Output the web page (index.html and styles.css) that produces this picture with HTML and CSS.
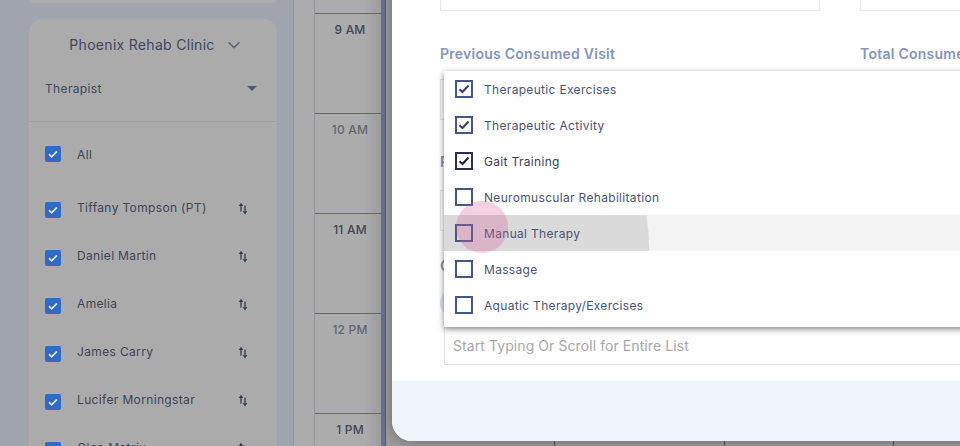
FILE: index.html
```html
<!DOCTYPE html>
<html lang="en">
<head>
    <meta charset="UTF-8">
    <meta name="viewport" content="width=device-width, initial-scale=1.0">
    <title>Schedule</title>
    <link rel="stylesheet" href="styles.css">
</head>
<body>
    <div class="page">
        <aside class="side">
            <div class="card-top"></div>
            <div class="card">
                <div class="clinic">
                    <span>Phoenix Rehab Clinic</span>
                    <svg class="chev" width="14" height="8" viewBox="0 0 14 8"><path d="M1.500 1.200 7 6.600l5.500-5.400" fill="none" stroke="#5c6479" stroke-width="1.500"/></svg>
                </div>
                <div class="picker">
                    <span>Therapist</span>
                    <i class="caret"></i>
                </div>
                <ul class="staff">
                    <li class="staff-all">
                        <svg class="tick" width="16" height="16" viewBox="0 0 16 16"><rect width="16" height="16" rx="2" fill="#3269c6"/><path d="M4 8.200l2.700 2.600L12 5.400" fill="none" stroke="#dfe3ea" stroke-width="1.800"/></svg>
                        <span>All</span>
                    </li>
                    <li>
                        <svg class="tick" width="16" height="16" viewBox="0 0 16 16"><rect width="16" height="16" rx="2" fill="#3269c6"/><path d="M4 8.200l2.700 2.600L12 5.400" fill="none" stroke="#dfe3ea" stroke-width="1.800"/></svg>
                        <span>Tiffany Tompson (PT)</span>
                        <svg class="sort" width="10" height="13" viewBox="0 0 10 13"><path d="M3 9.500V2M7 3.500V11" fill="none" stroke="#333b50" stroke-width="1.300"/><path d="M.8 4 3 .8 5.200 4zM4.800 9.200h4.400L7 12.400z" fill="#333b50"/></svg>
                    </li>
                    <li>
                        <svg class="tick" width="16" height="16" viewBox="0 0 16 16"><rect width="16" height="16" rx="2" fill="#3269c6"/><path d="M4 8.200l2.700 2.600L12 5.400" fill="none" stroke="#dfe3ea" stroke-width="1.800"/></svg>
                        <span>Daniel Martin</span>
                        <svg class="sort" width="10" height="13" viewBox="0 0 10 13"><path d="M3 9.500V2M7 3.500V11" fill="none" stroke="#333b50" stroke-width="1.300"/><path d="M.8 4 3 .8 5.200 4zM4.800 9.200h4.400L7 12.400z" fill="#333b50"/></svg>
                    </li>
                    <li>
                        <svg class="tick" width="16" height="16" viewBox="0 0 16 16"><rect width="16" height="16" rx="2" fill="#3269c6"/><path d="M4 8.200l2.700 2.600L12 5.400" fill="none" stroke="#dfe3ea" stroke-width="1.800"/></svg>
                        <span>Amelia</span>
                        <svg class="sort" width="10" height="13" viewBox="0 0 10 13"><path d="M3 9.500V2M7 3.500V11" fill="none" stroke="#333b50" stroke-width="1.300"/><path d="M.8 4 3 .8 5.200 4zM4.800 9.200h4.400L7 12.400z" fill="#333b50"/></svg>
                    </li>
                    <li>
                        <svg class="tick" width="16" height="16" viewBox="0 0 16 16"><rect width="16" height="16" rx="2" fill="#3269c6"/><path d="M4 8.200l2.700 2.600L12 5.400" fill="none" stroke="#dfe3ea" stroke-width="1.800"/></svg>
                        <span>James Carry</span>
                        <svg class="sort" width="10" height="13" viewBox="0 0 10 13"><path d="M3 9.500V2M7 3.500V11" fill="none" stroke="#333b50" stroke-width="1.300"/><path d="M.8 4 3 .8 5.200 4zM4.800 9.200h4.400L7 12.400z" fill="#333b50"/></svg>
                    </li>
                    <li>
                        <svg class="tick" width="16" height="16" viewBox="0 0 16 16"><rect width="16" height="16" rx="2" fill="#3269c6"/><path d="M4 8.200l2.700 2.600L12 5.400" fill="none" stroke="#dfe3ea" stroke-width="1.800"/></svg>
                        <span>Lucifer Morningstar</span>
                        <svg class="sort" width="10" height="13" viewBox="0 0 10 13"><path d="M3 9.500V2M7 3.500V11" fill="none" stroke="#333b50" stroke-width="1.300"/><path d="M.8 4 3 .8 5.200 4zM4.800 9.200h4.400L7 12.400z" fill="#333b50"/></svg>
                    </li>
                    <li>
                        <svg class="tick" width="16" height="16" viewBox="0 0 16 16"><rect width="16" height="16" rx="2" fill="#3269c6"/><path d="M4 8.200l2.700 2.600L12 5.400" fill="none" stroke="#dfe3ea" stroke-width="1.800"/></svg>
                        <span>Olga Matrix</span>
                        <svg class="sort" width="10" height="13" viewBox="0 0 10 13"><path d="M3 9.500V2M7 3.500V11" fill="none" stroke="#333b50" stroke-width="1.300"/><path d="M.8 4 3 .8 5.200 4zM4.800 9.200h4.400L7 12.400z" fill="#333b50"/></svg>
                    </li>
                </ul>
            </div>
        </aside>
        <div class="gutter"></div>
        <div class="times">
            <div class="hour">9 AM</div>
            <div class="hour hour-dim">10 AM</div>
            <div class="hour">11 AM</div>
            <div class="hour hour-dim">12 PM</div>
            <div class="hour">1 PM</div>
        </div>
        <div class="grid-edge"></div>
        <div class="grid">
            <div class="grid-col grid-first"></div>
            <div class="grid-col"></div>
            <div class="grid-col"></div>
            <div class="grid-col"></div>
        </div>
    </div>

    <div class="modal">
        <div class="modal-body">
            <div class="form-row form-row-top">
                <div class="input-box input-a"></div>
                <div class="input-box input-b"></div>
            </div>
            <div class="form-row labels">
                <div class="label label-a">Previous Consumed Visit</div>
                <div class="label">Total Consumed Visit</div>
            </div>
            <div class="input-box input-mid input-first"></div>
            <div class="label label-mid">Plan</div>
            <div class="input-box input-mid input-second"></div>
            <div class="label label-mid label-code">CPT</div>
            <i class="chip"></i>
            <div class="search-box">Start Typing Or Scroll for Entire List</div>
        </div>
        <div class="modal-foot"></div>

        <ul class="menu">
            <li>
                <svg class="box" width="18" height="18" viewBox="0 0 18 18"><rect x="1" y="1" width="16" height="16" fill="none" stroke="#46558f" stroke-width="2"/><path d="M4.500 9.200l3 2.800 6-6.500" fill="none" stroke="#39436a" stroke-width="2"/></svg>
                <span>Therapeutic Exercises</span>
            </li>
            <li>
                <svg class="box" width="18" height="18" viewBox="0 0 18 18"><rect x="1" y="1" width="16" height="16" fill="none" stroke="#46558f" stroke-width="2"/><path d="M4.500 9.200l3 2.800 6-6.500" fill="none" stroke="#39436a" stroke-width="2"/></svg>
                <span>Therapeutic Activity</span>
            </li>
            <li>
                <svg class="box" width="18" height="18" viewBox="0 0 18 18"><rect x="1" y="1" width="16" height="16" fill="none" stroke="#2c2f4a" stroke-width="2"/><path d="M4.500 9.200l3 2.800 6-6.500" fill="none" stroke="#1f2238" stroke-width="2"/></svg>
                <span class="menu-dark">Gait Training</span>
            </li>
            <li>
                <svg class="box" width="18" height="18" viewBox="0 0 18 18"><rect x="1" y="1" width="16" height="16" fill="none" stroke="#46558f" stroke-width="2"/></svg>
                <span>Neuromuscular Rehabilitation</span>
            </li>
            <li class="menu-hover">
                <div class="wave-clip"><i class="wave"></i></div>
                <svg class="box" width="18" height="18" viewBox="0 0 18 18"><rect x="1" y="1" width="16" height="16" fill="none" stroke="#46558f" stroke-width="2"/></svg>
                <span>Manual Therapy</span>
                <i class="ripple"></i>
            </li>
            <li>
                <svg class="box" width="18" height="18" viewBox="0 0 18 18"><rect x="1" y="1" width="16" height="16" fill="none" stroke="#46558f" stroke-width="2"/></svg>
                <span>Massage</span>
            </li>
            <li>
                <svg class="box" width="18" height="18" viewBox="0 0 18 18"><rect x="1" y="1" width="16" height="16" fill="none" stroke="#46558f" stroke-width="2"/></svg>
                <span>Aquatic Therapy/Exercises</span>
            </li>
        </ul>
    </div>
</body>
</html>
```

FILE: styles.css
```css
html, body {
    margin: 0;
    height: 100%;
    overflow: hidden;
}
body {
    font-family: Inter, "Noto Sans", sans-serif;
    background-color: #777;
}
ul {
    list-style: none;
    margin: 0;
    padding: 0;
}

/* page behind the dialog */
.page {
    display: flex;
    height: 446px;
    background-color: #9a9a9a;
}
.side {
    width: 294px;
    box-sizing: border-box;
    padding-left: 29px;
    padding-right: 16px;
    background-color: #9fa4ae;
    border-right: 1px solid #8f939d;
    flex-shrink: 0;
}
.card-top {
    height: 3px;
    margin-bottom: 16px;
    background-color: #ababab;
    border-radius: 0 0 14px 14px;
}
.card {
    background-color: #ababab;
    border-radius: 14px 14px 0 0;
    height: 427px;
    overflow: hidden;
}
.clinic {
    display: flex;
    justify-content: center;
    align-items: center;
    gap: 12px;
    height: 50px;
    padding-left: 4px;
    font-size: 14px;
    letter-spacing: 0.3px;
    color: #40485e;
}
.chev {
    margin-top: 1px;
}
.picker {
    display: flex;
    justify-content: space-between;
    align-items: center;
    height: 38px;
    padding: 0 20px 14px 16px;
    font-size: 12px;
    letter-spacing: 0.35px;
    color: #40485e;
    border-bottom: 1px solid #a0a0a4;
}
.caret {
    width: 0;
    height: 0;
    border-left: 5px solid transparent;
    border-right: 5px solid transparent;
    border-top: 5px solid #50566a;
}
.staff li {
    display: flex;
    align-items: center;
    height: 48px;
    padding-left: 16px;
    font-size: 12px;
    letter-spacing: 0.35px;
    color: #3d4558;
}
.staff li span {
    margin-left: 16px;
    width: 161px;
    margin-top: -5px;
}
.staff .staff-all {
    height: 56px;
    margin-top: 4px;
    margin-bottom: 4px;
}
.staff .staff-all span {
    margin-top: 0;
}
.tick {
    flex-shrink: 0;
}
.sort {
    margin-top: -3px;
}
.gutter {
    width: 20px;
    background-color: #acacac;
    flex-shrink: 0;
}
.times {
    width: 66px;
    flex-shrink: 0;
    padding-top: 13px;
    border-left: 1px solid #94979f;
    background: linear-gradient(to right, #acacac 75%, #9c9c9c);
}
.hour {
    height: 91px;
    padding: 8px 0 0 4px;
    border-top: 1px solid #5f6680;
    text-align: center;
    font-size: 12px;
    font-weight: 500;
    letter-spacing: 0.2px;
    color: #3e4559;
}
.hour-dim {
    color: #5f6678;
}
.grid-edge {
    width: 5px;
    background-color: #6a6f8a;
    border-right: 1px solid #565a70;
    box-sizing: border-box;
    flex-shrink: 0;
}
.grid {
    flex: 1;
    display: flex;
}
.grid-col {
    width: 169.5px;
    flex-shrink: 0;
    border-left: 1px solid #4a4a4a;
    box-sizing: border-box;
}
.grid-first {
    width: 168px;
    border-left: none;
}

/* dialog */
.modal {
    position: absolute;
    left: 392px;
    top: -40px;
    width: 640px;
    height: 481px;
    display: flex;
    flex-direction: column;
    background-color: #fff;
    border-radius: 20px;
    box-shadow: 0 0 12px rgba(0, 0, 0, 0.32);
    overflow: hidden;
}
.modal-body {
    flex: 1;
    padding: 0 0 0 48px;
}
.form-row {
    display: flex;
}
.form-row-top {
    height: 51px;
    gap: 40px;
}
.input-box {
    box-sizing: border-box;
    border: 1px solid #e6e8ec;
    flex-shrink: 0;
}
.input-a {
    width: 380px;
    height: 51px;
    border-top: none;
}
.input-b {
    width: 200px;
    height: 51px;
    border-top: none;
}
.labels {
    margin-top: 32px;
    height: 20px;
    align-items: center;
}
.label {
    font-size: 14px;
    font-weight: 600;
    letter-spacing: 0.25px;
    color: #8794b8;
    white-space: nowrap;
    flex-shrink: 0;
}
.label-a {
    width: 420px;
}
.input-mid {
    width: 380px;
    height: 41px;
}
.input-first {
    margin-top: 16px;
}
.input-second {
    margin-top: 18px;
}
.label-mid {
    height: 20px;
    line-height: 20px;
    margin-top: 32px;
}
.label-code {
    margin-top: 25px;
}
.chip {
    display: block;
    width: 30px;
    height: 30px;
    margin: 12px 0 0 0;
    border-radius: 50%;
    background-color: #dde2f5;
}
.search-box {
    margin-top: 9px;
    margin-left: 4px;
    height: 38px;
    line-height: 38px;
    box-sizing: border-box;
    padding-left: 8px;
    border: 1px solid #dfe5ee;
    border-top: none;
    font-size: 14px;
    letter-spacing: 0.08px;
    color: #a8a8a8;
    white-space: nowrap;
}
.modal-foot {
    height: 60px;
    flex-shrink: 0;
    background-color: #eef3fc;
}

/* open dropdown */
.menu {
    position: absolute;
    left: 52px;
    top: 111px;
    width: 600px;
    padding-bottom: 4px;
    background-color: #fff;
    box-shadow: 0 2px 6px rgba(0, 0, 0, 0.5);
}
.menu li {
    position: relative;
    display: flex;
    align-items: center;
    height: 36px;
    padding-left: 11px;
    font-size: 12px;
    letter-spacing: 0.32px;
    color: #4b5470;
}
.menu li span {
    margin-left: 11px;
    position: relative;
}
.menu .menu-dark {
    color: #3a3f55;
}
.box {
    position: relative;
    flex-shrink: 0;
}
.menu-hover {
    background-color: #f3f3f3;
}
.wave-clip {
    position: absolute;
    top: 0;
    right: 0;
    bottom: 0;
    left: 0;
    overflow: hidden;
}
.wave {
    position: absolute;
    left: -179px;
    top: -160px;
    width: 384px;
    height: 384px;
    border-radius: 50%;
    background-color: rgba(0, 0, 0, 0.1);
}
.ripple {
    position: absolute;
    left: 12px;
    top: -14px;
    width: 52px;
    height: 52px;
    border-radius: 50%;
    background-color: rgba(214, 90, 150, 0.28);
}
```
